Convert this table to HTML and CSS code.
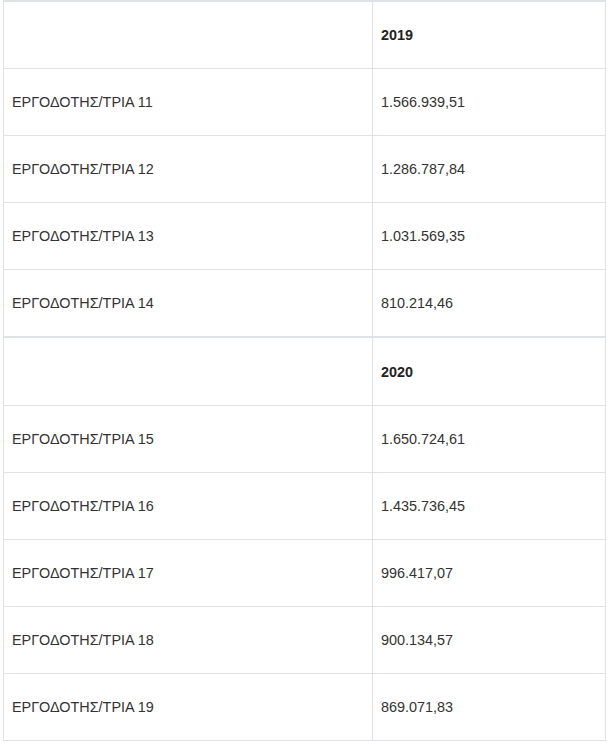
FILE: index.html
```html
<!DOCTYPE html>
<html>
<head>
<meta charset="utf-8">
<link rel="stylesheet" href="styles.css">
</head>
<body>
<table class="data">
<tbody>
<tr class="head"><td></td><td>2019</td></tr>
<tr><td>ΕΡΓΟΔΟΤΗΣ/ΤΡΙΑ 11</td><td>1.566.939,51</td></tr>
<tr><td>ΕΡΓΟΔΟΤΗΣ/ΤΡΙΑ 12</td><td>1.286.787,84</td></tr>
<tr><td>ΕΡΓΟΔΟΤΗΣ/ΤΡΙΑ 13</td><td>1.031.569,35</td></tr>
<tr><td>ΕΡΓΟΔΟΤΗΣ/ΤΡΙΑ 14</td><td>810.214,46</td></tr>
<tr class="head sep"><td></td><td>2020</td></tr>
<tr><td>ΕΡΓΟΔΟΤΗΣ/ΤΡΙΑ 15</td><td>1.650.724,61</td></tr>
<tr><td>ΕΡΓΟΔΟΤΗΣ/ΤΡΙΑ 16</td><td>1.435.736,45</td></tr>
<tr><td>ΕΡΓΟΔΟΤΗΣ/ΤΡΙΑ 17</td><td>996.417,07</td></tr>
<tr><td>ΕΡΓΟΔΟΤΗΣ/ΤΡΙΑ 18</td><td>900.134,57</td></tr>
<tr><td>ΕΡΓΟΔΟΤΗΣ/ΤΡΙΑ 19</td><td>869.071,83</td></tr>
</tbody>
</table>
</body>
</html>
```
FILE: styles.css
```css
html, body {
  margin: 0;
  padding: 0;
  background: #fff;
}
body {
  font-family: "Liberation Sans", Arial, sans-serif;
  font-size: 14.4px;
  color: #333;
}
.data {
  border-collapse: collapse;
  margin-left: 3px;
  width: 603px;
  border-top: 2px solid #dde3e9;
}
.data td {
  border: 1px solid #dfe3e7;
  padding: 0 8px;
  height: 66.1px;
  vertical-align: middle;
}
.data td:first-child {
  width: 352px;
}
.data tr.head td {
  font-weight: bold;
  color: #222;
}
.data tr.sep td {
  border-top: 2px solid #dde3e9;
}
```
